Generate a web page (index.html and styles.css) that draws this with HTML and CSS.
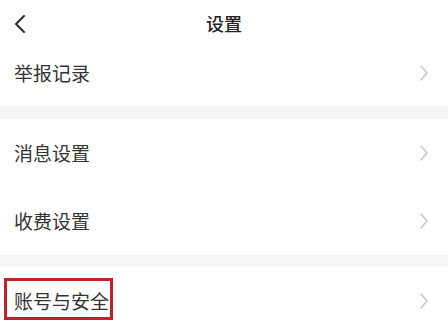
FILE: index.html
```html
<!doctype html>
<html>
<head>
  <meta charset="utf-8">
  <title>设置</title>
  <link rel="stylesheet" href="styles.css">
</head>
<body>
  <div class="header">
    <svg class="back" width="14" height="20" viewBox="0 0 14 20">
      <path d="M11 2 L3 10 L11 18" fill="none" stroke="#333" stroke-width="2.2" stroke-linecap="round" stroke-linejoin="round"/>
    </svg>
    <span class="title">设置</span>
  </div>

  <div class="group">
    <div class="row first">
      <span class="label">举报记录</span>
      <svg class="arrow" width="12" height="18" viewBox="0 0 12 18"><path d="M3 2 L9 9 L3 16" fill="none" stroke="#c8c8c8" stroke-width="1.6" stroke-linecap="round" stroke-linejoin="round"/></svg>
    </div>
  </div>

  <div class="divider first-divider"></div>

  <div class="group">
    <div class="row">
      <span class="label">消息设置</span>
      <svg class="arrow" width="12" height="18" viewBox="0 0 12 18"><path d="M3 2 L9 9 L3 16" fill="none" stroke="#c8c8c8" stroke-width="1.6" stroke-linecap="round" stroke-linejoin="round"/></svg>
    </div>
    <div class="row">
      <span class="label">收费设置</span>
      <svg class="arrow" width="12" height="18" viewBox="0 0 12 18"><path d="M3 2 L9 9 L3 16" fill="none" stroke="#c8c8c8" stroke-width="1.6" stroke-linecap="round" stroke-linejoin="round"/></svg>
    </div>
  </div>

  <div class="divider"></div>

  <div class="group">
    <div class="row">
      <span class="label highlight">账号与安全</span>
      <svg class="arrow" width="12" height="18" viewBox="0 0 12 18"><path d="M3 2 L9 9 L3 16" fill="none" stroke="#c8c8c8" stroke-width="1.6" stroke-linecap="round" stroke-linejoin="round"/></svg>
    </div>
  </div>
</body>
</html>
```

FILE: styles.css
```css
body {
  margin: 0;
  background-color: #ffffff;
  font-family: "Noto Sans CJK SC", "Noto Sans", sans-serif;
  color: #333333;
  overflow: hidden;
}
.header {
  height: 40px;
  padding-top: 6px;
  box-sizing: border-box;
  display: flex;
  align-items: center;
  justify-content: center;
  position: relative;
}
.back {
  position: absolute;
  left: 13px;
  top: 14px;
}
.title {
  font-size: 18px;
  font-weight: 500;
  color: #222222;
}
.row {
  height: 68px;
  display: flex;
  align-items: center;
  justify-content: space-between;
  padding: 0 18px 0 14px;
}
.row.first {
  height: 66px;
}
.label {
  font-size: 19px;
  line-height: 24px;
  color: #333333;
  position: relative;
}
.arrow {
  display: block;
}
.divider {
  height: 12px;
  background-color: #f5f6f7;
}
.first-divider {
  height: 13px;
}
.highlight::after {
  content: "";
  position: absolute;
  left: -10px;
  right: -4px;
  top: -11px;
  bottom: -7px;
  border: 3px solid #c0212a;
}
```
